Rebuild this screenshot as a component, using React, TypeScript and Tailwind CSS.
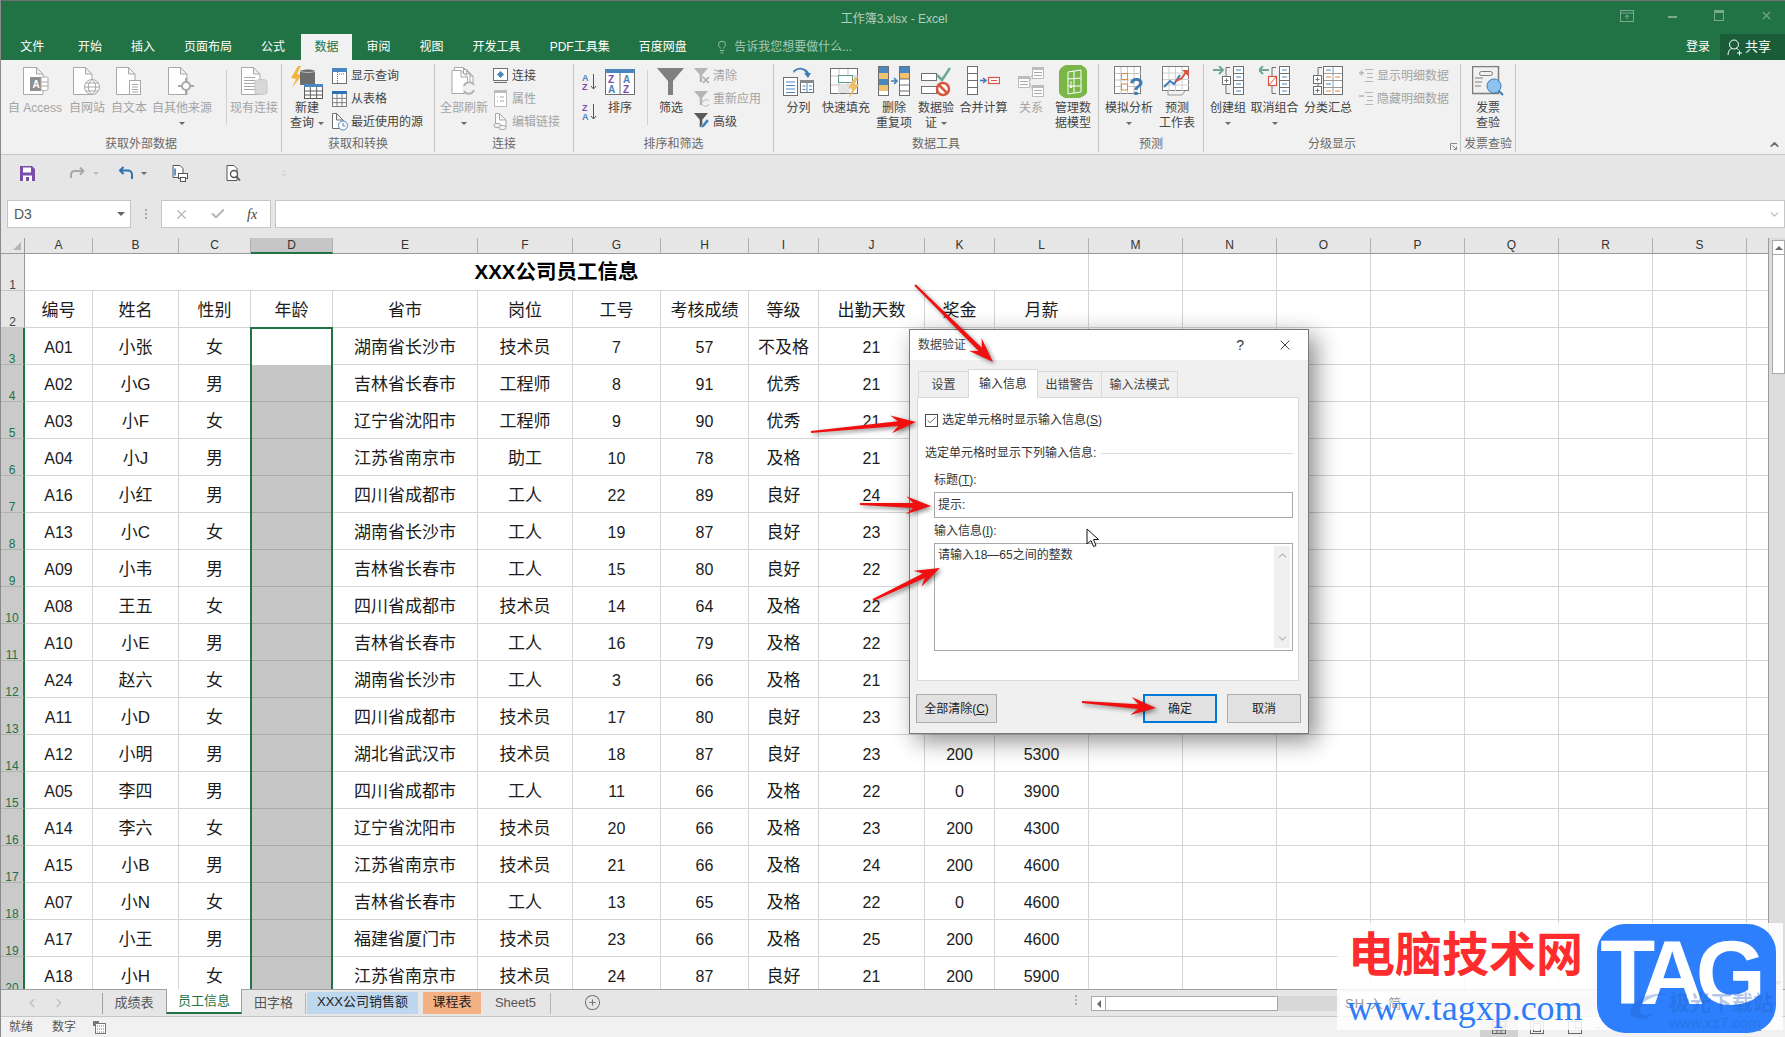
import type { ReactNode } from "react";
import { Check, ChevronDown, ChevronLeft, ChevronRight, ChevronUp, CirclePlus, Lightbulb, X } from "lucide-react";

const OFF = "#a8a8a8";
const MID = "#6f6f6f";
const BLUE = "#4a86c0";

const COLUMNS = "ABCDEFGHIJKLMNOPQRS".split("");

const HEAD = ["编号", "姓名", "性别", "年龄", "省市", "岗位", "工号", "考核成绩", "等级", "出勤天数", "奖金", "月薪"];

const ROWS = [
  ["A01", "小张", "女", "", "湖南省长沙市", "技术员", "7", "57", "不及格", "21", "", ""],
  ["A02", "小G", "男", "", "吉林省长春市", "工程师", "8", "91", "优秀", "21", "", ""],
  ["A03", "小F", "女", "", "辽宁省沈阳市", "工程师", "9", "90", "优秀", "21", "", ""],
  ["A04", "小J", "男", "", "江苏省南京市", "助工", "10", "78", "及格", "21", "", ""],
  ["A16", "小红", "男", "", "四川省成都市", "工人", "22", "89", "良好", "24", "", ""],
  ["A13", "小C", "女", "", "湖南省长沙市", "工人", "19", "87", "良好", "23", "", ""],
  ["A09", "小韦", "男", "", "吉林省长春市", "工人", "15", "80", "良好", "22", "", ""],
  ["A08", "王五", "女", "", "四川省成都市", "技术员", "14", "64", "及格", "22", "", ""],
  ["A10", "小E", "男", "", "吉林省长春市", "工人", "16", "79", "及格", "22", "", ""],
  ["A24", "赵六", "女", "", "湖南省长沙市", "工人", "3", "66", "及格", "21", "", ""],
  ["A11", "小D", "女", "", "四川省成都市", "技术员", "17", "80", "良好", "23", "", ""],
  ["A12", "小明", "男", "", "湖北省武汉市", "技术员", "18", "87", "良好", "23", "200", "5300"],
  ["A05", "李四", "男", "", "四川省成都市", "工人", "11", "66", "及格", "22", "0", "3900"],
  ["A14", "李六", "女", "", "辽宁省沈阳市", "技术员", "20", "66", "及格", "23", "200", "4300"],
  ["A15", "小B", "男", "", "江苏省南京市", "技术员", "21", "66", "及格", "24", "200", "4600"],
  ["A07", "小N", "女", "", "吉林省长春市", "工人", "13", "65", "及格", "22", "0", "4600"],
  ["A17", "小王", "男", "", "福建省厦门市", "技术员", "23", "66", "及格", "25", "200", "4600"],
  ["A18", "小H", "女", "", "江苏省南京市", "技术员", "24", "87", "良好", "21", "200", "5900"],
];

const ARROWS = [
  [915, 285, 993, 362],
  [811, 432, 916, 422],
  [860, 504, 931, 506],
  [873, 600, 940, 568],
  [1082, 702, 1156, 708],
];

function arrowPoints([x1, y1, x2, y2]: number[]) {
  const len = Math.hypot(x2 - x1, y2 - y1);
  const ux = (x2 - x1) / len;
  const uy = (y2 - y1) / len;
  const at = (along: number, side: number) =>
    `${x1 + ux * along - uy * side},${y1 + uy * along + ux * side}`;
  const neck = len - 18;
  return [
    at(0, -1),
    at(neck, -2.4),
    at(len - 25, -9),
    at(len, 0),
    at(len - 25, 9),
    at(neck, 2.4),
    at(0, 1),
  ].join(" ");
}

function Svg({ w, h, children }: { w: number; h: number; children: ReactNode }) {
  return (
    <svg width={w} height={h} viewBox={`0 0 ${w} ${h}`} className="block shrink-0" fill="none">
      {children}
    </svg>
  );
}

function Doc({ x = 0, y = 0, w = 20, h = 27, c = OFF }: { x?: number; y?: number; w?: number; h?: number; c?: string }) {
  return (
    <path
      d={`M${x + 0.5} ${y + 0.5}h${w - 7}l6.5 6.5V${y + h - 0.5}H${x + 0.5}zM${x + w - 6.5} ${y + 0.5}v6.5h6.5`}
      stroke={c}
      fill="#fff"
    />
  );
}

function Table({ x, y, w, h, top = BLUE, line = MID }: { x: number; y: number; w: number; h: number; top?: string; line?: string }) {
  const cols = [1, 2].map((n) => x + (w * n) / 3);
  const rows = [1, 2].map((n) => y + 3 + ((h - 3) * n) / 3);
  return (
    <g>
      <rect x={x + 0.5} y={y + 0.5} width={w - 1} height={h - 1} fill="#fff" stroke={line} />
      <rect x={x} y={y} width={w} height={3} fill={top} />
      {cols.map((v) => (
        <path key={v} d={`M${v} ${y + 3}V${y + h}`} stroke={line} />
      ))}
      {rows.map((v) => (
        <path key={v} d={`M${x} ${v}H${x + w}`} stroke={line} />
      ))}
    </g>
  );
}

function Funnel({ x = 0, y = 0, s = 1, c = "#808080" }: { x?: number; y?: number; s?: number; c?: string }) {
  return (
    <path
      transform={`translate(${x} ${y}) scale(${s})`}
      d="M0 0h27L16 13v14h-5V13z"
      fill={c}
    />
  );
}

function Lines({ x, y, w, n, gap = 3, c = OFF }: { x: number; y: number; w: number; n: number; gap?: number; c?: string }) {
  return (
    <>
      {Array.from({ length: n }, (_, i) => (
        <path key={i} d={`M${x} ${y + i * gap + 0.5}h${w}`} stroke={c} />
      ))}
    </>
  );
}

function Caret({ className = "" }: { className?: string }) {
  return (
    <span
      className={
        "inline-block h-0 w-0 border-x-[3px] border-t-[3px] border-x-transparent border-t-[#6a6a6a] " + className
      }
    />
  );
}

function Large({
  width,
  icon,
  first,
  second,
  off,
  caret,
}: {
  width: string;
  icon: ReactNode;
  first: string;
  second?: string;
  off?: boolean;
  caret?: boolean;
}) {
  return (
    <div className={"flex shrink-0 flex-col items-center pt-[2px] " + width}>
      <div className="flex h-[35px] items-start justify-center">{icon}</div>
      <div className={"whitespace-nowrap text-[12px] leading-[15px] " + (off ? "text-[#a4a4a4]" : "text-[#444]")}>
        {first}
      </div>
      <div
        className={
          "flex h-[15px] items-center gap-[4px] whitespace-nowrap text-[12px] leading-[15px] " +
          (off ? "text-[#a4a4a4]" : "text-[#444]")
        }
      >
        {second}
        {caret ? <Caret /> : null}
      </div>
    </div>
  );
}

function Small({ icon, text, off, gap }: { icon: ReactNode; text: string; off?: boolean; gap: string }) {
  return (
    <div className={"flex h-[23px] items-center whitespace-nowrap text-[12px] " + gap + (off ? " text-[#a4a4a4]" : " text-[#444]")}>
      {icon}
      <span>{text}</span>
    </div>
  );
}

function Group({ width, label, children }: { width: string; label: string; children: ReactNode }) {
  return (
    <section className={"relative mt-[4px] flex h-[88px] shrink-0 flex-col border-r border-[#c6c6c6] " + width}>
      <div className="flex min-h-0 flex-1">{children}</div>
      <div className="h-[15px] text-center text-[12px] leading-[15px] text-[#6a6a6a]">{label}</div>
    </section>
  );
}

function Ribbon() {
  return (
    <div className="flex h-[95px] shrink-0 border-b border-[#c6c6c6] bg-[#f1f1f1]">
      <Group width="w-[281px]" label="获取外部数据">
        <Large
          width="w-[68px]"
          off
          first="自 Access"
          icon={
            <Svg w={28} h={30}>
              <Doc x={2} y={1} w={20} h={28} />
              <rect x={9} y={11} width={11} height={14} fill="#8f8f8f" />
              <text x={11.5} y={22} fontSize={10} fontWeight={700} fill="#fff" fontFamily="Liberation Sans">A</text>
              <path d="M20 12c4-2 7-1 7 0v11c0 1.500-4 2-7 1z" fill="#fff" stroke={OFF} />
              <path d="M20 16h7M20 20h7" stroke={OFF} />
            </Svg>
          }
        />
        <Large
          width="w-[36px]"
          off
          first="自网站"
          icon={
            <Svg w={30} h={30}>
              <Doc x={1} y={1} w={19} h={28} />
              <circle cx={20} cy={21} r={7.500} fill="#fff" stroke={OFF} />
              <path d="M12.500 21h15M20 13.500c-5 4-5 11 0 15M20 13.500c5 4 5 11 0 15M14 17h12M14 25h12" stroke={OFF} />
            </Svg>
          }
        />
        <Large
          width="w-[48px]"
          off
          first="自文本"
          icon={
            <Svg w={28} h={30}>
              <Doc x={1} y={1} w={19} h={28} />
              <rect x={14.500} y={14.500} width={11} height={14} fill="#fff" stroke={OFF} />
              <Lines x={17} y={18} w={6} n={4} gap={2.500} />
            </Svg>
          }
        />
        <Large
          width="w-[58px]"
          off
          caret
          first="自其他来源"
          icon={
            <Svg w={30} h={30}>
              <Doc x={1} y={1} w={19} h={28} />
              <circle cx={19} cy={20} r={4} fill="#fff" stroke={OFF} strokeWidth={2} />
              <path d="M19 12v4M19 24v4M11 20h4M23 20h4" stroke={OFF} strokeWidth={2} />
            </Svg>
          }
        />
        <div className="mt-[6px] h-[55px] w-[16px] shrink-0 border-r border-[#d0d0d0]" />
        <Large
          width="w-[54px]"
          off
          first="现有连接"
          icon={
            <Svg w={28} h={30}>
              <Doc x={1} y={1} w={19} h={28} />
              <Lines x={4} y={11} w={11} n={5} gap={3} />
              <path d="M15 15c3-2 11-2 12 0v12c-2 2-10 2-12 0z" fill="#d9d7d9" stroke="#c8c6c8" />
            </Svg>
          }
        />
      </Group>
      <Group width="w-[153px]" label="获取和转换">
        <Large
          width="w-[50px]"
          caret
          first="新建"
          second="查询"
          icon={
            <Svg w={34} h={33}>
              <path d="M8 0L1 12l5 1-4 9 10-13-5-1 4-8z" fill="#f2b544" />
              <path d="M10 5c3-2 13-2 15 0v14H10z" fill="#6d6d6d" />
              <path d="M10 5c3 2 13 2 15 0" stroke="#bdbdbd" />
              <Table x={14} y={18} w={19} h={15} top="#4a86c0" line="#5c5c5c" />
            </Svg>
          }
        />
        <div className="flex flex-col">
          <Small
            gap="gap-[4px]"
            text="显示查询"
            icon={
              <Svg w={15} h={16}>
                <rect x={0.500} y={0.500} width={14} height={15} fill="#fff" stroke={MID} />
                <rect width={15} height={4} fill={BLUE} />
                <path d="M5.500 4v11M7 6h6" stroke={MID} strokeDasharray="1 1" />
              </Svg>
            }
          />
          <Small
            gap="gap-[4px]"
            text="从表格"
            icon={
              <Svg w={15} h={16}>
                <Table x={0} y={0} w={15} h={16} top="#2f6fb3" line="#7c7c7c" />
              </Svg>
            }
          />
          <Small
            gap="gap-[3px]"
            text="最近使用的源"
            icon={
              <Svg w={16} h={18}>
                <Doc x={0} y={0} w={11} h={16} c={MID} />
                <circle cx={11} cy={12.500} r={4.500} fill="#fff" stroke={BLUE} />
                <path d="M11 10v3h2.500" stroke={BLUE} />
              </Svg>
            }
          />
        </div>
      </Group>
      <Group width="w-[139px]" label="连接">
        <Large
          width="w-[58px]"
          off
          caret
          first="全部刷新"
          icon={
            <Svg w={26} h={32}>
              <Doc x={6} y={3} w={16} h={24} />
              <Doc x={3} y={1} w={16} h={24} />
              <Doc x={0.500} y={4} w={16} h={24} />
              <circle cx={18} cy={22} r={7} fill="#f1f1f1" />
              <path d="M13 20a5.500 5.500 0 0 1 10-1M23 24a5.500 5.500 0 0 1-10 1" stroke="#b4b4b4" strokeWidth={2} />
            </Svg>
          }
        />
        <div className="flex flex-col">
          <Small
            gap="gap-[4px]"
            text="连接"
            icon={
              <Svg w={15} h={15}>
                <rect x={0.500} y={0.500} width={14} height={12} fill="#fff" stroke={MID} />
                <path d="M7.500 3l3.500 3.500L7.500 10 4 6.500z" fill={BLUE} />
                <path d="M1 14.500h13" stroke={MID} />
              </Svg>
            }
          />
          <Small
            gap="gap-[4px]"
            off
            text="属性"
            icon={
              <Svg w={15} h={17}>
                <rect x={1.500} y={0.500} width={12} height={16} fill="#fff" stroke="#bcbcbc" />
                <rect x={1} y={0} width={13} height={3} fill="#bcbcbc" />
                <path d="M4 7h1M7 7h4M4 11h1M7 11h4" stroke={OFF} />
              </Svg>
            }
          />
          <Small
            gap="gap-[4px]"
            off
            text="编辑链接"
            icon={
              <Svg w={15} h={17}>
                <Doc x={2} y={0} w={11} h={14} />
                <rect x={1} y={10.500} width={7} height={4} rx={2} fill="#f1f1f1" stroke={OFF} />
                <rect x={6} y={12.500} width={7} height={4} rx={2} fill="#f1f1f1" stroke={OFF} />
              </Svg>
            }
          />
        </div>
      </Group>
      <Group width="w-[200px]" label="排序和筛选">
        <div className="flex w-[24px] shrink-0 flex-col items-end pt-[9px]">
          <Svg w={16} h={18}>
            <text x={0} y={8} fontSize={9} fontWeight={700} fill={BLUE} fontFamily="Liberation Sans">A</text>
            <text x={0} y={17} fontSize={9} fontWeight={700} fill="#7a4ea8" fontFamily="Liberation Sans">Z</text>
            <path d="M11.500 1v15M9 13l2.500 3 2.500-3" stroke="#555" />
          </Svg>
          <div className="h-[12px]" />
          <Svg w={16} h={18}>
            <text x={0} y={8} fontSize={9} fontWeight={700} fill="#7a4ea8" fontFamily="Liberation Sans">Z</text>
            <text x={0} y={17} fontSize={9} fontWeight={700} fill={BLUE} fontFamily="Liberation Sans">A</text>
            <path d="M11.500 1v15M9 13l2.500 3 2.500-3" stroke="#555" />
          </Svg>
        </div>
        <Large
          width="w-[44px]"
          first="排序"
          icon={
            <div className="mt-[3px]">
              <Svg w={30} h={26}>
                <rect x={0.500} y={0.500} width={29} height={25} fill="#fff" stroke={MID} />
                <rect width={30} height={4} fill={BLUE} />
                <path d="M15 4v22" stroke={MID} />
                <text x={3} y={14} fontSize={10} fontWeight={700} fill="#7a4ea8" fontFamily="Liberation Sans">Z</text>
                <text x={3} y={24} fontSize={10} fontWeight={700} fill={BLUE} fontFamily="Liberation Sans">A</text>
                <text x={18} y={14} fontSize={10} fontWeight={700} fill={BLUE} fontFamily="Liberation Sans">A</text>
                <text x={18} y={24} fontSize={10} fontWeight={700} fill="#7a4ea8" fontFamily="Liberation Sans">Z</text>
              </Svg>
            </div>
          }
        />
        <div className="mt-[6px] h-[55px] w-[6px] shrink-0 border-r border-[#d0d0d0]" />
        <Large
          width="w-[46px]"
          first="筛选"
          icon={
            <div className="mt-[2px]">
              <Svg w={28} h={28}>
                <Funnel />
              </Svg>
            </div>
          }
        />
        <div className="flex flex-col">
          <Small
            gap="gap-[3px]"
            off
            text="清除"
            icon={
              <Svg w={16} h={16}>
                <Funnel s={0.520} c="#b5b5b5" />
                <path d="M9 9l6 6M15 9l-6 6" stroke="#a8a8a8" strokeWidth={1.500} />
              </Svg>
            }
          />
          <Small
            gap="gap-[3px]"
            off
            text="重新应用"
            icon={
              <Svg w={16} h={16}>
                <Funnel s={0.520} c="#b5b5b5" />
                <path d="M9 11a3.500 3.500 0 0 1 6-1M15 13a3.500 3.500 0 0 1-6 1" stroke="#b5b5b5" />
              </Svg>
            }
          />
          <Small
            gap="gap-[3px]"
            text="高级"
            icon={
              <Svg w={16} h={17}>
                <Funnel s={0.520} c="#5a5a5a" />
                <path d="M7 15l1-3 5-6 2 2-5 6z" fill="#2f7dc4" stroke="#f1f1f1" strokeWidth={0.500} />
              </Svg>
            }
          />
        </div>
      </Group>
      <Group width="w-[325px]" label="数据工具">
        <Large
          width="w-[49px]"
          first="分列"
          icon={
            <Svg w={32} h={31}>
              <path d="M11 7a7 7 0 0 1 12 0l-2 0 4 5 3-5-2 0A10 10 0 0 0 10 5z" fill="#3d7cb8" />
              <rect x={0.500} y={11.500} width={14} height={18} fill="#fff" stroke={MID} />
              <path d="M3 16h9M3 19.500h9M3 23h9M3 26.500h9" stroke={BLUE} />
              <rect x={17.500} y={14.500} width={13} height={12} fill="#fff" stroke={MID} />
              <rect x={17} y={14} width={14} height={3} fill="#888" />
              <path d="M24 17v10M19.500 20h3M26 20h3M19.500 23.500h3M26 23.500h3" stroke={BLUE} />
            </Svg>
          }
        />
        <Large
          width="w-[46px]"
          first="快速填充"
          icon={
            <Svg w={32} h={32}>
              <rect x={0.500} y={2.500} width={27} height={25} fill="#fff" stroke={MID} />
              <path d="M9 3v25M18 3v25M1 10h27M1 19h27" stroke="#c4c4c4" />
              <rect x={8.500} y={9.500} width={14} height={7} fill="#fff" stroke="#5f9a8b" />
              <rect x={9} y={19} width={11} height={8} fill="#e4e4e4" />
              <path d="M25 11l-7 11 4 1-3 9 10-13-4-1 3-7z" fill="#f0bd6a" />
            </Svg>
          }
        />
        <Large
          width="w-[50px]"
          first="删除"
          second="重复项"
          icon={
            <Svg w={32} h={31}>
              <rect x={0.500} y={0.500} width={10} height={29} fill="#fff" stroke={MID} />
              <rect x={21.500} y={0.500} width={10} height={29} fill="#fff" stroke={MID} />
              <rect x={1} y={1} width={9} height={6} fill={BLUE} />
              <rect x={1} y={7} width={9} height={6} fill="#f0c26f" />
              <rect x={1} y={13} width={9} height={6} fill={BLUE} />
              <rect x={1} y={19} width={9} height={6} fill="#f0c26f" />
              <rect x={22} y={1} width={9} height={6} fill={BLUE} />
              <rect x={22} y={7} width={9} height={6} fill="#f0c26f" />
              <path d="M22 13h9M22 19h9M22 25h9" stroke={MID} />
              <path d="M13 15h5M16 12l3 3-3 3" stroke="#3d7cb8" strokeWidth={1.500} />
            </Svg>
          }
        />
        <Large
          width="w-[34px]"
          caret
          first="数据验"
          second="证"
          icon={
            <Svg w={30} h={31}>
              <rect x={0.500} y={7.500} width={15} height={7} fill="#fff" stroke={MID} />
              <rect x={0.500} y={20.500} width={15} height={7} fill="#fff" stroke={MID} />
              <path d="M16 9l5 5 8-12" stroke="#6fa79a" strokeWidth={2.500} />
              <circle cx={22} cy={23} r={6} fill="#fff" stroke="#d9553f" strokeWidth={2.500} />
              <path d="M18 19l8 8" stroke="#d9553f" strokeWidth={2.500} />
            </Svg>
          }
        />
        <Large
          width="w-[61px]"
          first="合并计算"
          icon={
            <Svg w={33} h={30}>
              <rect x={0.500} y={0.500} width={10} height={28} fill="#fff" stroke={MID} />
              <path d="M1 7.500h9M1 14.500h9M1 21.500h9" stroke={MID} />
              <path d="M13 14.500h5M16 12l3 2.500-3 2.500" stroke="#3d7cb8" strokeWidth={1.500} />
              <rect x={21.500} y={11.500} width={11} height={6} fill="#fff" stroke="#d9553f" strokeWidth={1.200} />
              <path d="M24 14.500h6" stroke="#d9553f" />
            </Svg>
          }
        />
        <Large
          width="w-[34px]"
          off
          first="关系"
          icon={
            <Svg w={26} h={31}>
              <rect x={14.500} y={1.500} width={11} height={11} fill="#fff" stroke="#bcbcbc" />
              <rect x={14} y={1} width={12} height={3} fill="#bcbcbc" />
              <Lines x={16} y={6} w={8} n={2} gap={3} />
              <rect x={0.500} y={10.500} width={11} height={11} fill="#fff" stroke="#bcbcbc" />
              <rect x={0} y={10} width={12} height={3} fill="#bcbcbc" />
              <Lines x={2} y={15} w={8} n={2} gap={3} />
              <rect x={14.500} y={19.500} width={11} height={11} fill="#fff" stroke="#bcbcbc" />
              <rect x={14} y={19} width={12} height={3} fill="#bcbcbc" />
              <Lines x={16} y={24} w={8} n={2} gap={3} />
              <path d="M12 15l2-6M12 17l2 6" stroke="#c4c4c4" />
            </Svg>
          }
        />
        <Large
          width="w-[50px]"
          first="管理数"
          second="据模型"
          icon={
            <div className="-mt-[1px]">
              <Svg w={28} h={33}>
                <path d="M7 0h15c4 2 6 4 6 6v21c0 2-4 5-8 6H6c-4-2-6-4-6-6V7c0-3 4-6 7-7z" fill="#7ab648" />
                <path d="M9 7l13-2v22L9 29z" stroke="#fff" fill="none" />
                <path d="M15 6v22M9 14l13-1M9 21h13" stroke="#fff" />
                <path d="M12 16v7M10.500 21l1.500 2 1.500-2" stroke="#fff" />
              </Svg>
            </div>
          }
        />
      </Group>
      <Group width="w-[105px]" label="预测">
        <Large
          width="w-[60px]"
          caret
          first="模拟分析"
          icon={
            <Svg w={30} h={32}>
              <rect x={0.500} y={0.500} width={26} height={27} fill="#fff" stroke="#7c7c7c" />
              <path d="M7 1v27M13.500 1v27M20 1v27M1 7.500h26M1 14h26M1 20.500h26" stroke="#c4c4c4" />
              <rect x={7.500} y={7.500} width={6} height={6} fill="#fff" stroke="#e08a3c" />
              <rect x={7.500} y={18} width={6} height={6} fill="#fff" stroke="#e08a3c" />
              <text x={15} y={29} fontSize={24} fontWeight={700} fill="#3d7cb8" fontFamily="Liberation Sans">?</text>
            </Svg>
          }
        />
        <Large
          width="w-[36px]"
          first="预测"
          second="工作表"
          icon={
            <Svg w={30} h={30}>
              <rect x={0.500} y={0.500} width={26} height={24} fill="#fff" stroke="#7c7c7c" />
              <path d="M7 1v24M13.500 1v24M20 1v24M1 7h26M1 13.500h26M1 19h26" stroke="#d0d0d0" />
              <path d="M2 21l6-6 4 3 6-9" stroke="#3d7cb8" strokeWidth={2} />
              <path d="M14 15l6-3 4-6" stroke="#d9553f" strokeWidth={2} />
              <path d="M20 4h7v7z" fill="#d9553f" />
              <path d="M6 25v4h14l3-4" stroke="#9a9a9a" />
            </Svg>
          }
        />
      </Group>
      <Group width="w-[257px]" label="分级显示">
        <Large
          width="w-[48px]"
          caret
          first="创建组"
          icon={
            <Svg w={31} h={30}>
              <path d="M0 4h9M6 0l4 4-4 4" stroke="#6fa79a" strokeWidth={2} />
              <path d="M17 1.500h-4v26h4" stroke={MID} />
              <rect x={9.500} y={10.500} width={8} height={8} fill="#fff" stroke={MID} />
              <path d="M11.500 14.500h4M13.500 12.500v4" stroke={MID} />
              <rect x={20.500} y={0.500} width={10} height={28} fill="#fff" stroke={MID} />
              <path d="M21 7.500h9M21 14.500h9M21 21.500h9" stroke={MID} />
              <path d="M23 4h5M23 11h5M23 18h5M23 25h5" stroke={BLUE} />
            </Svg>
          }
        />
        <Large
          width="w-[45px]"
          caret
          first="取消组合"
          icon={
            <Svg w={31} h={30}>
              <path d="M10 4H1M4 0L0 4l4 4" stroke="#6fa79a" strokeWidth={2} />
              <path d="M17 1.500h-4v26h4" stroke={MID} />
              <rect x={9.500} y={10.500} width={8} height={9} fill="#fff" stroke="#d9553f" strokeWidth={1.200} />
              <path d="M10 19l7-8" stroke="#d9553f" />
              <rect x={20.500} y={0.500} width={10} height={28} fill="#fff" stroke={MID} />
              <path d="M21 7.500h9M21 14.500h9M21 21.500h9" stroke={MID} />
              <path d="M23 4h5M23 11h5M23 18h5M23 25h5" stroke={BLUE} />
            </Svg>
          }
        />
        <Large
          width="w-[62px]"
          first="分类汇总"
          icon={
            <Svg w={30} h={30}>
              <path d="M9 1.500H5v26h4" stroke={MID} />
              <rect x={0.500} y={9.500} width={8} height={8} fill="#fff" stroke={MID} />
              <path d="M2.500 13.500h4M4.500 11.500v4" stroke={MID} />
              <rect x={0.500} y={20.500} width={8} height={8} fill="#fff" stroke={MID} />
              <path d="M2.500 24.500h4M4.500 22.500v4" stroke={MID} />
              <rect x={10.500} y={0.500} width={19} height={28} fill="#fff" stroke={MID} />
              <path d="M11 7.500h18M11 14.500h18M11 21.500h18M20 1v28" stroke="#9a9a9a" />
              <path d="M13 4h5M13 18h5" stroke={BLUE} />
              <path d="M13 11h5M22 11h5M13 25h5M22 25h5" stroke="#e08a3c" />
            </Svg>
          }
        />
        <div className="flex flex-col">
          <Small
            gap="gap-[4px]"
            off
            text="显示明细数据"
            icon={
              <Svg w={14} h={14}>
                <path d="M0 4h5M2.500 1.500v5" stroke="#b5b5b5" strokeWidth={1.500} />
                <path d="M6 0.500h8M8 4.500h6M8 8.500h6M6 12.500h8" stroke="#b5b5b5" />
              </Svg>
            }
          />
          <Small
            gap="gap-[4px]"
            off
            text="隐藏明细数据"
            icon={
              <Svg w={14} h={14}>
                <path d="M0 4h5" stroke="#b5b5b5" strokeWidth={1.500} />
                <path d="M6 0.500h8M8 4.500h6M8 8.500h6M6 12.500h8" stroke="#b5b5b5" />
              </Svg>
            }
          />
        </div>
        <div className="absolute bottom-[2px] right-[3px]">
          <Svg w={7} h={7}>
            <path d="M0.500 7V0.500H7" stroke="#8a8a8a" />
            <path d="M2.500 2.500L6.500 6.500M6.500 3.500v3h-3" stroke="#8a8a8a" />
          </Svg>
        </div>
      </Group>
      <Group width="w-[55px]" label="发票查验">
        <Large
          width="w-[54px]"
          first="发票"
          second="查验"
          icon={
            <Svg w={32} h={30}>
              <rect x={0.500} y={0.500} width={26} height={27} fill="#f1f1f1" stroke="#7c7c7c" strokeWidth={1.500} />
              <rect x={7.500} y={5.500} width={13} height={4} rx={2} stroke="#7c7c7c" />
              <path d="M3 12h8M3 16h7M3 20h6" stroke="#7c7c7c" />
              <circle cx={22} cy={20} r={7} fill="#8ec3ef" stroke="#3d7cb8" />
              <path d="M27 25l4 4" stroke="#3d7cb8" strokeWidth={2} />
            </Svg>
          }
        />
      </Group>
      <div className="flex flex-1 items-end justify-end pb-[3px] pr-[4px]">
        <ChevronUp size={13} strokeWidth={3} className="text-[#6a6a6a]" />
      </div>
    </div>
  );
}

function Dialog() {
  return (
    <div className="absolute left-[908px] top-[329px] h-[405px] w-[400px] border border-[#7a7a7a] bg-[#f0f0f0] text-[12px] text-[#333] shadow-[7px_7px_22px_rgba(0,0,0,0.45)]">
      <div className="flex h-[30px] items-center bg-white pl-[8px]">
        <span className="text-[#444]">数据验证</span>
        <span className="ml-auto mr-[33px] font-['Liberation_Sans'] text-[14px] text-[#333]">?</span>
        <X size={16} strokeWidth={1.300} className="mr-[15px] text-[#222]" />
      </div>
      <div className="mt-[9px] flex h-[28px] items-end pl-[8px]">
        <div className="flex h-[26px] w-[50px] items-center justify-center border-l border-t border-[#d9d9d9] text-[#444]">设置</div>
        <div className="relative z-10 -mb-px flex h-[29px] w-[70px] items-center justify-center border-x border-t border-[#d9d9d9] bg-white text-[#333]">输入信息</div>
        <div className="flex h-[26px] w-[63px] items-center justify-center border-t border-[#d9d9d9] text-[#444]">出错警告</div>
        <div className="flex h-[26px] w-[77px] items-center justify-center border-x border-t border-[#d9d9d9] text-[#444]">输入法模式</div>
      </div>
      <div className="ml-[7px] h-[284px] w-[382px] border border-[#d9d9d9] bg-white pl-[7px]">
        <div className="mt-[15px] flex h-[14px] items-center gap-[4px]">
          <span className="flex h-[13px] w-[13px] items-center justify-center border border-[#4a4a4a] bg-white">
            <Check size={11} strokeWidth={1.600} className="text-[#333]" />
          </span>
          <span>选定单元格时显示输入信息(<u>S</u>)</span>
        </div>
        <div className="mt-[18px] flex h-[16px] items-center gap-[5px] pr-[5px]">
          <span className="whitespace-nowrap">选定单元格时显示下列输入信息:</span>
          <span className="h-px flex-1 bg-[#dcdcdc]" />
        </div>
        <div className="pl-[9px] pr-[5px]">
          <div className="mt-[11px] h-[16px] leading-[16px]">标题(<u>T</u>):</div>
          <div className="mt-[4px] flex h-[26px] items-center border border-[#a8a8a8] pl-[3px]">提示:</div>
          <div className="mt-[5px] h-[16px] leading-[16px]">输入信息(<u>I</u>):</div>
          <div className="mt-[4px] flex h-[108px] border border-[#a8a8a8] pl-[3px] pt-[4px]">
            <span className="h-[15px] flex-1 leading-[15px]">请输入18—65之间的整数</span>
            <div className="-mt-[2px] mb-[2px] mr-[2px] flex h-[102px] w-[16px] flex-col items-center justify-between bg-[#f0f0f0] py-[3px] text-[#b5b5b5]">
              <ChevronUp size={13} strokeWidth={2} />
              <ChevronDown size={13} strokeWidth={2} />
            </div>
          </div>
        </div>
      </div>
      <div className="mt-[13px] flex h-[29px] pl-[6px]">
        <div className="flex w-[81px] items-center justify-center border border-[#adadad] bg-[#e1e1e1] text-[#222]">全部清除(<u>C</u>)</div>
        <div className="ml-[146px] flex w-[74px] items-center justify-center border-2 border-[#0078d7] bg-[#e1e1e1] text-[#222]">确定</div>
        <div className="ml-[10px] flex w-[74px] items-center justify-center border border-[#adadad] bg-[#e1e1e1] text-[#222]">取消</div>
      </div>
    </div>
  );
}

function Sheet() {
  const cell = "flex items-center justify-center border-b border-r border-[#d4d4d4] pt-[3px] whitespace-nowrap";
  const size = (col: number) => (col === 0 || col >= 6 && col !== 8 ? "text-[16px]" : "text-[17px]");
  return (
    <div className="flex min-h-0 flex-1 bg-[#e6e6e6]">
      <div className="relative min-w-0 flex-1 overflow-hidden">
        <div className="grid grid-cols-[24px_68px_86px_72px_82px_145px_95px_88px_88px_70px_106px_70px_94px_94px_94px_94px_94px_94px_94px_94px_21px] text-[#1c1c1c]">
          <div className="relative h-[16px] border-b border-r border-[#9a9a9a] bg-[#e6e6e6]">
            <span className="absolute bottom-[3px] right-[3px] h-0 w-0 border-b-[8px] border-l-[8px] border-b-[#b5b5b5] border-l-transparent" />
          </div>
          {COLUMNS.map((col) => (
            <div
              key={col}
              className={
                "flex h-[16px] items-center justify-center border-r border-[#b0b0b0] text-[12px] leading-[15px] " +
                (col === "D" ? "border-b-2 border-b-[#217346] bg-[#c6c6c6] text-[#333]" : "border-b border-b-[#9a9a9a] text-[#333]")
              }
            >
              {col}
            </div>
          ))}
          <div className="h-[16px] border-b border-[#9a9a9a] bg-[#e6e6e6]" />

          <div className="flex h-[37px] items-end justify-center border-b border-r border-[#c6c6c6] border-r-[#9a9a9a] bg-[#e6e6e6] text-[12px] leading-[9px] text-[#444]">1</div>
          <div className="col-span-12 flex h-[37px] items-center justify-center border-b border-r border-[#d4d4d4] bg-white pt-[1px] text-[20.500px] font-bold text-black">
            XXX公司员工信息
          </div>
          {COLUMNS.slice(12).map((col) => (
            <div key={col} className="h-[37px] border-b border-r border-[#d4d4d4] bg-white" />
          ))}
          <div className="h-[37px] border-b border-[#d4d4d4] bg-white" />

          <div className="flex h-[37px] items-end justify-center border-b border-r border-[#c6c6c6] border-r-[#9a9a9a] bg-[#e6e6e6] text-[12px] leading-[9px] text-[#444]">2</div>
          {HEAD.map((text) => (
            <div key={text} className={cell + " h-[37px] bg-white text-[17px]"}>
              {text}
            </div>
          ))}
          {COLUMNS.slice(12).map((col) => (
            <div key={col} className="h-[37px] border-b border-r border-[#d4d4d4] bg-white" />
          ))}
          <div className="h-[37px] border-b border-[#d4d4d4] bg-white" />

          {ROWS.map((row, index) => (
            <div key={row[0]} className="contents">
              <div className="flex h-[37px] items-end justify-center border-b border-r-2 border-b-[#b2b2b2] border-r-[#217346] bg-[#cacaca] text-[12px] leading-[9px] text-[#217346]">
                {index + 3}
              </div>
              {row.map((text, col) =>
                col === 3 ? (
                  <div
                    key={col}
                    className={
                      "h-[37px] " +
                      (index === 0 ? "bg-white" : "border-b border-[#a9a9a9] bg-[#c6c6c6]")
                    }
                  />
                ) : (
                  <div key={col} className={cell + " h-[37px] bg-white " + size(col)}>
                    {text}
                  </div>
                ),
              )}
              {COLUMNS.slice(12).map((col) => (
                <div key={col} className="h-[37px] border-b border-r border-[#d4d4d4] bg-white" />
              ))}
              <div className="h-[37px] border-b border-[#d4d4d4] bg-white" />
            </div>
          ))}
        </div>
        <div className="absolute left-[249px] top-[89px] h-[700px] w-[83px] border-2 border-[#217346]" />
      </div>
      <aside className="flex w-[17px] shrink-0 flex-col border-l border-[#9a9a9a] bg-[#dcdcdc] pl-[3px] pt-[2px]">
        <div className="flex h-[15px] items-center justify-center border border-[#a8a8a8] bg-white">
          <span className="h-0 w-0 border-x-[4px] border-b-[4px] border-x-transparent border-b-[#6a6a6a]" />
        </div>
        <div className="h-[119px] border-x border-b border-[#a8a8a8] bg-white" />
        <span className="mb-[4px] ml-[2px] mt-auto h-0 w-0 border-x-[4px] border-t-[4px] border-x-transparent border-t-[#6a6a6a]" />
      </aside>
    </div>
  );
}

function SheetTabs() {
  return (
    <div className="flex h-[28px] shrink-0 items-start border-y border-t-[#a0a0a0] border-b-[#c6c6c6] bg-[#e6e6e6] text-[13px] text-[#555]">
      <div className="flex h-[26px] w-[101px] items-center gap-[13px] pl-[24px] text-[#c0c0c0]">
        <ChevronLeft size={14} strokeWidth={2.500} />
        <ChevronRight size={14} strokeWidth={2.500} />
      </div>
      <div className="mt-[3px] flex h-[21px] w-[64px] items-center justify-center border-x border-x-[#b5b5b5] border-l-[#a0a0a0] border-r-transparent pb-[2px]">成绩表</div>
      <div className="-mt-px flex h-[25px] w-[76px] items-center justify-center border-x border-b-2 border-x-[#a0a0a0] border-b-[#217346] bg-white text-[#217346]">员工信息</div>
      <div className="mt-[3px] flex h-[21px] w-[64px] items-center justify-center border-r border-[#b5b5b5] pb-[2px]">田字格</div>
      <div className="ml-px mt-[2px] flex h-[22px] w-[111px] items-center justify-center bg-[#bdd7ee] pb-[2px] text-[#222]">XXX公司销售额</div>
      <div className="ml-[5px] mt-[2px] flex h-[22px] w-[58px] items-center justify-center bg-[#f4b183] pb-[2px] text-[#222]">课程表</div>
      <div className="mt-[3px] flex h-[21px] w-[70px] items-center justify-center border-r border-[#b5b5b5] pb-[2px]">Sheet5</div>
      <CirclePlus size={17} strokeWidth={1.500} className="ml-[33px] mt-[4px] shrink-0 text-[#777]" />
      <div className="ml-[473px] mt-[5px] flex h-[16px] w-[17px] flex-col gap-[2px] pl-[1px]">
        <span className="h-[2px] w-[2px] bg-[#b0b0b0]" />
        <span className="h-[2px] w-[2px] bg-[#b0b0b0]" />
        <span className="h-[2px] w-[2px] bg-[#b0b0b0]" />
      </div>
      <div className="mr-[20px] mt-[6px] flex h-[15px] flex-1 bg-[#d8d8d8]">
        <div className="flex w-[15px] items-center justify-center border border-[#a8a8a8] bg-white">
          <span className="h-0 w-0 border-y-[4px] border-r-[4px] border-y-transparent border-r-[#6a6a6a]" />
        </div>
        <div className="w-[172px] border-y border-r border-[#a8a8a8] bg-white" />
      </div>
    </div>
  );
}

function StatusBar() {
  return (
    <div className="flex h-[20px] shrink-0 items-center bg-[#f1f1f1] pl-[8px] text-[12px] text-[#555]">
      <span>就绪</span>
      <span className="ml-[19px]">数字</span>
      <div className="ml-[17px]">
        <Svg w={13} h={13}>
          <rect x={0} y={0} width={6} height={5} fill="#777" />
          <rect x={2.500} y={2.500} width={10} height={10} fill="#fff" stroke="#777" />
          <path d="M4 5h7M4 8h7M4 11h7" stroke="#777" strokeDasharray="1 1" />
        </Svg>
      </div>
      <div className="ml-[1374px] flex h-full w-[38px] items-center justify-center bg-[#d2d2d2]">
        <Svg w={14} h={13}>
          <rect x={0.500} y={0.500} width={13} height={12} stroke="#666" />
          <path d="M5 1v11M9 1v11M1 5h12M1 9h12" stroke="#666" />
        </Svg>
      </div>
      <div className="ml-[12px]">
        <Svg w={14} h={13}>
          <rect x={0.500} y={0.500} width={13} height={12} stroke="#666" />
          <rect x={3.500} y={2.500} width={7} height={8} stroke="#666" />
        </Svg>
      </div>
      <div className="ml-[24px]">
        <Svg w={14} h={13}>
          <path d="M0.500 13V0.500h13V13M0 12.500h14M7 1v6h7" stroke="#666" />
        </Svg>
      </div>
      <span className="ml-[14px] text-[#777]">-</span>
      <div className="relative ml-[6px] h-px w-[102px] bg-[#999]">
        <span className="absolute left-[40px] top-[-6px] h-[12px] w-[3px] bg-[#555]" />
      </div>
      <span className="ml-[6px] text-[14px] text-[#777]">+</span>
      <span className="ml-[16px] text-[#666]">80%</span>
    </div>
  );
}

function Watermark() {
  return (
    <>
      <div className="absolute left-[1336px] top-[923px] h-[107px] w-[446px] bg-white/85" />
      <div className="absolute left-[1339px] top-[992px] flex h-[24px] w-[60px] items-center whitespace-nowrap rounded-[5px] bg-white pl-[5px] text-[13px] tracking-[1px] text-[#999]">
        SH 入 简
      </div>
      <div className="absolute left-[1347px] top-[923px] whitespace-nowrap text-[47px] font-bold leading-[64px] text-[#fe2c2c]">
        电脑技术网
      </div>
      <div className="absolute left-[1346px] top-[986px] whitespace-nowrap font-['Liberation_Serif'] text-[36px] leading-[44px] text-[#2d7dfa]">
        www.tagxp.com
      </div>
      <div className="absolute left-[1596px] top-[924px] flex h-[109px] w-[179px] items-center justify-center overflow-hidden rounded-[28px] bg-[#2d7ffd] pb-[12px] text-[90px] font-bold leading-none tracking-[-9px] text-white">
        <span className="pr-[16px]">TAG</span>
      </div>
      <div className="absolute left-[1668px] top-[990px] whitespace-nowrap text-[21px] font-bold leading-[26px] text-[#1f5fc4]/35">
        极光下载站
      </div>
      <div className="absolute left-[1668px] top-[1014px] whitespace-nowrap text-[15px] leading-[18px] text-[#1f5fc4]/35">
        www.xz7.com
      </div>
      <div className="absolute left-[1625px] top-[990px]">
        <Svg w={44} h={34}>
          <path d="M4 22C6 8 26 2 40 4 26 6 14 12 14 20c0 6 10 6 14 2-2 8-24 10-24 0z" fill="#1f5fc4" fillOpacity={0.3} />
        </Svg>
      </div>
    </>
  );
}

export default function App() {
  return (
    <div className="relative flex h-[1037px] w-[1785px] flex-col overflow-hidden border-l border-[#8a8a8a] bg-[#e6e6e6] font-['Liberation_Sans','Noto_Sans_CJK_SC',sans-serif]">
      <header className="relative flex h-[34px] shrink-0 items-center border-t border-[#6f6f6f] bg-[#217346] text-[12px]">
        <span className="mx-auto pl-[2px] pt-[2px] text-[12px] text-[#b3cfc0]">工作簿3.xlsx - Excel</span>
        <div className="absolute right-[12px] top-[8px] flex items-center text-[#79a98f]">
          <Svg w={14} h={12}>
            <rect x={0.500} y={0.500} width={13} height={11} stroke="currentColor" />
            <path d="M1 3h12M7 9V5M5 7l2-2 2 2" stroke="currentColor" />
          </Svg>
          <span className="ml-[34px] mt-[3px] h-[2px] w-[9px] bg-current" />
          <span className="ml-[37px] h-[11px] w-[10px] border border-t-[3px] border-current" />
          <X size={13} strokeWidth={2} className="ml-[36px]" />
        </div>
      </header>

      <nav className="flex h-[26px] shrink-0 items-stretch bg-[#217346] text-[12px] text-white">
        <div className="flex w-[62.500px] items-center justify-center">文件</div>
        {["开始", "插入", "页面布局", "公式"].map((tab) => (
          <div key={tab} className="flex items-center px-[14.500px]">
            {tab}
          </div>
        ))}
        <div className="ml-[1.500px] flex items-center bg-[#f1f1f1] px-[13.500px] text-[#217346]">数据</div>
        {["审阅", "视图", "开发工具", "PDF工具集", "百度网盘"].map((tab) => (
          <div key={tab} className="flex items-center px-[14.500px]">
            {tab}
          </div>
        ))}
        <div className="ml-[14px] flex items-center gap-[5px] text-[#a8c9b6]">
          <Lightbulb size={14} strokeWidth={1.500} />
          告诉我您想要做什么...
        </div>
        <div className="ml-auto flex items-center pr-[10px]">登录</div>
        <div className="flex w-[65px] items-center gap-[3px] bg-[#1a5c38] pl-[7px] text-[13px]">
          <Svg w={15} h={17}>
            <circle cx={7} cy={5.500} r={4.500} stroke="#fff" />
            <path d="M1 16c0-4 2-6 4-7M9 9c1 .5 2 1 2.500 2M10 14h5M12.500 11.500v5" stroke="#fff" />
          </Svg>
          共享
        </div>
      </nav>

      <Ribbon />

      <div className="flex h-[45px] shrink-0 items-center bg-[#e6e6e6] pb-[8px] text-[#9a9a9a]">
        <div className="ml-[19px]">
          <Svg w={15} h={15}>
            <path d="M0 0h12l3 3v12H0z" fill="#7a4ea8" />
            <rect x={3} y={1.500} width={8} height={5} fill="#fff" />
            <rect x={3} y={9.500} width={9} height={5.500} fill="#fff" />
            <rect x={6} y={11} width={3} height={4} fill="#7a4ea8" />
          </Svg>
        </div>
        <div className="ml-[35px]">
          <Svg w={15} h={14}>
            <path d="M14 11V7.500A3.500 3.500 0 0 0 10.500 4H1.500M5 0.500L1.500 4 5 7.500" transform="translate(15 0) scale(-1 1)" stroke="#a8a8a8" strokeWidth={2} />
          </Svg>
        </div>
        <Caret className="ml-[8px] border-t-[#bbb]" />
        <div className="ml-[19px]">
          <Svg w={15} h={15}>
            <path d="M14 13V8.500A4 4 0 0 0 10 4.500H2M5.500 1L2 4.500 5.500 8" stroke="#2f6fb3" strokeWidth={2} />
          </Svg>
        </div>
        <Caret className="ml-[8px]" />
        <div className="ml-[25px]">
          <Svg w={16} h={17}>
            <path d="M1 0.500h7l3 3v9H1z" fill="#fff" stroke="#555" />
            <path d="M3 3.500v7" stroke="#2f6fb3" strokeWidth={1.500} />
            <rect x={6.500} y={8.500} width={9} height={5} fill="#fff" stroke="#555" />
            <rect x={8.500} y={12.500} width={5} height={4} fill="#fff" stroke="#555" />
          </Svg>
        </div>
        <div className="ml-[38px]">
          <Svg w={15} h={17}>
            <path d="M1 0.500h7l3 3v12H1z" fill="#fff" stroke="#555" />
            <circle cx={8} cy={9} r={3.500} fill="#fff" stroke="#555" strokeWidth={1.400} />
            <path d="M10.500 11.500l3.500 4" stroke="#555" strokeWidth={1.600} />
          </Svg>
        </div>
        <div className="ml-[40px] flex flex-col items-center gap-[2px]">
          <span className="h-px w-[5px] bg-[#d4d4d4]" />
          <Caret className="border-t-[#d4d4d4]" />
        </div>
      </div>

      <div className="flex h-[28px] shrink-0 items-stretch bg-[#e6e6e6] text-[#555]">
        <div className="ml-[6px] flex w-[124px] items-center justify-between border border-[#c6c6c6] bg-white pl-[6px] pr-[5px] text-[14px]">
          D3
          <span className="h-0 w-0 border-x-[4px] border-t-[4px] border-x-transparent border-t-[#666]" />
        </div>
        <div className="flex w-[30px] flex-col items-center justify-center gap-[2px]">
          <span className="h-[2px] w-[2px] bg-[#a8a8a8]" />
          <span className="h-[2px] w-[2px] bg-[#a8a8a8]" />
          <span className="h-[2px] w-[2px] bg-[#a8a8a8]" />
        </div>
        <div className="flex w-[110px] items-center border border-[#c6c6c6] bg-white pl-[12px]">
          <X size={15} strokeWidth={2} className="text-[#b5b5b5]" />
          <Check size={16} strokeWidth={3} className="ml-[21px] text-[#b5b5b5]" />
          <span className="ml-[21px] font-['Liberation_Serif'] text-[14px] italic text-[#444]">fx</span>
        </div>
        <div className="ml-[4px] flex flex-1 items-center justify-end border border-[#c6c6c6] bg-white pr-[3px]">
          <ChevronDown size={13} strokeWidth={2.500} className="text-[#bdbdbd]" />
        </div>
      </div>

      <div className="h-[10px] shrink-0" />

      <Sheet />
      <SheetTabs />
      <StatusBar />

      <Dialog />

      <div className="absolute left-[1085px] top-[528px]">
        <Svg w={14} h={21}>
          <path d="M1 1v15l4-3.500 2.500 6 2.500-1-2.500-6h5z" fill="#fff" stroke="#111" />
        </Svg>
      </div>

      <svg className="pointer-events-none absolute -left-px top-0" width={1785} height={1037} viewBox="0 0 1785 1037">
        {ARROWS.map((arrow) => (
          <polygon
            key={arrow[0]}
            points={arrowPoints(arrow)}
            fill="#f01010"
            className="drop-shadow-[2px_2px_2px_rgba(0,0,0,0.45)]"
          />
        ))}
      </svg>

      <Watermark />
    </div>
  );
}
